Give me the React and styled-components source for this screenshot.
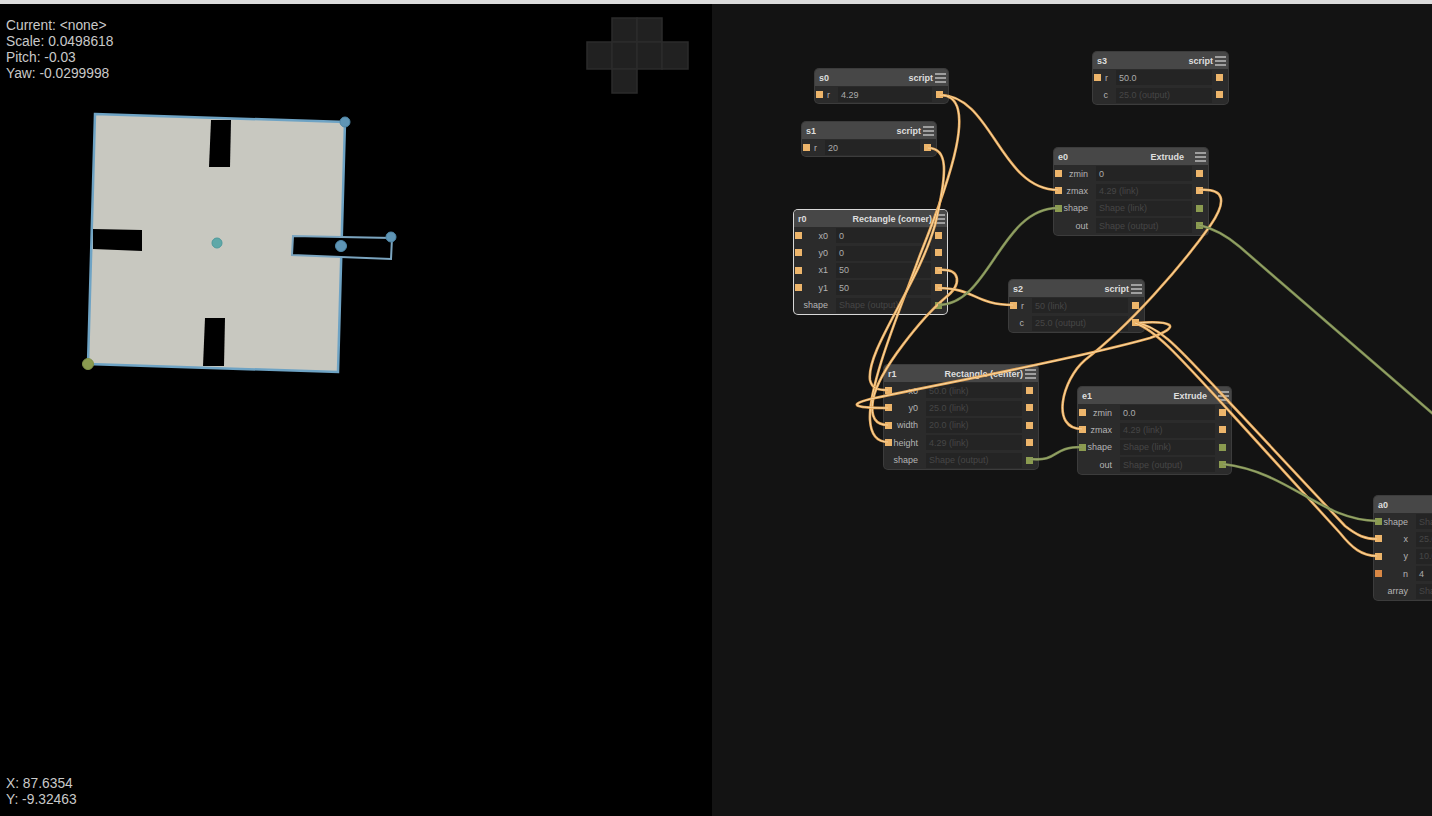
import React from 'react';
import styled, { createGlobalStyle } from 'styled-components';

const GlobalStyle = createGlobalStyle`
  html, body {
    margin: 0;
    padding: 0;
    background: #000;
    overflow: hidden;
  }
`;

const CANVAS_X = 712;
const CANVAS_Y = 4;

const Page = styled.div`
  width: 1432px;
  height: 816px;
  display: flex;
  flex-direction: column;
  font-family: "Liberation Sans", Arial, sans-serif;
`;

const TopStrip = styled.div`
  height: 4px;
  flex: none;
  background: #dcdcdc;
`;

const Panes = styled.div`
  flex: 1;
  display: flex;
  min-height: 0;
`;

// left side, 3d viewport
const Viewport = styled.div`
  position: relative;
  width: 712px;
  flex: none;
  background: #000;
  display: flex;
  flex-direction: column;
  justify-content: space-between;
  padding: 14px 6px 8px;
  box-sizing: border-box;
`;

const Readout = styled.div`
  font-size: 13.8px;
  line-height: 16px;
  color: #c9c9c9;
`;

const Overlay = styled.svg`
  position: absolute;
  left: 0;
  top: 0;
  pointer-events: none;
`;

const CubeFace = styled.rect`
  fill: #212121;
  stroke: #2b2b2b;
  stroke-width: 1.5;
`;

const Handle = styled.circle`
  fill: ${p => p.$fill || '#5f95b5'};
  stroke: ${p => p.$stroke || '#4f87a8'};
  stroke-width: 1;
`;

// right side, node graph
const Canvas = styled.div`
  position: relative;
  flex: 1;
  overflow: hidden;
  background: #131313;
`;

const NodeBox = styled.div`
  position: absolute;
  left: ${p => p.$x - CANVAS_X}px;
  top: ${p => p.$y - CANVAS_Y}px;
  width: ${p => p.$w}px;
  box-sizing: border-box;
  background: #2b2b2b;
  border-radius: 4px;
  box-shadow: 0 0 0 1px ${p => (p.$selected ? '#d8d8d8' : '#3c3c3c')};
`;

const NodeHeader = styled.div`
  height: 17px;
  display: flex;
  align-items: center;
  justify-content: space-between;
  padding: 0 2px 0 4px;
  background: #474747;
  border-radius: 4px 4px 0 0;
  font-size: 9px;
  font-weight: 700;
  color: #dedede;
  overflow: hidden;
  white-space: nowrap;
`;

const NodeTitle = styled.span`
  margin-left: auto;
  margin-right: ${p => p.$gap || 2}px;
`;

const MenuIcon = styled.svg`
  flex: none;
  width: 11px;
  height: 10px;
  stroke: #bdbdbd;
  stroke-width: 1.6;
`;

const Row = styled.div`
  position: relative;
  height: 17.4px;
  display: flex;
  align-items: center;
  font-size: 9px;
  color: #b4b4b4;
`;

const Label = styled.span`
  flex: none;
  width: ${p => p.$w - 8}px;
  text-align: right;
  box-sizing: border-box;
  margin-right: 8px;
`;

const Value = styled.div`
  flex: 1;
  height: 15px;
  margin-right: 16px;
  padding-left: 3px;
  display: flex;
  align-items: center;
  background: #242424;
  color: ${p => (p.$dim ? '#464646' : '#ababab')};
  white-space: nowrap;
  overflow: hidden;
`;

const Port = styled.span`
  position: absolute;
  top: 5px;
  width: 7px;
  height: 7px;
  background: ${p => p.$color};
  ${p => (p.$side === 'left' ? 'left: 0.5px;' : 'right: 5px;')}
`;

const WireLayer = styled.svg`
  position: absolute;
  left: 0;
  top: 0;
  pointer-events: none;
`;

const ORANGE = '#edb56b';
const GREEN = '#8b9b50';
const DEEP = '#d98845';

const row = (label, value, dim, left, right) => ({ label, value, dim, left, right });
const o = ORANGE;
const g = GREEN;

const nodes = [
  { id: 's0', title: 'script', x: 815, y: 69, w: 133, lw: 23, rows: [row('r', '4.29', false, o, o)] },
  {
    id: 's3', title: 'script', x: 1093, y: 52, w: 135, lw: 23,
    rows: [row('r', '50.0', false, o, o), row('c', '25.0 (output)', true, null, o)],
  },
  { id: 's1', title: 'script', x: 802, y: 122, w: 134, lw: 23, rows: [row('r', '20', false, o, o)] },
  {
    id: 'e0', title: 'Extrude', gap: 11, x: 1054, y: 148, w: 154, lw: 42,
    rows: [
      row('zmin', '0', false, o, o),
      row('zmax', '4.29 (link)', true, o, o),
      row('shape', 'Shape (link)', true, g, g),
      row('out', 'Shape (output)', true, null, g),
    ],
  },
  {
    id: 'r0', title: 'Rectangle (corner)', x: 794, y: 210, w: 153, lw: 42, selected: true,
    rows: [
      row('x0', '0', false, o, o),
      row('y0', '0', false, o, o),
      row('x1', '50', false, o, o),
      row('y1', '50', false, o, o),
      row('shape', 'Shape (output)', true, null, g),
    ],
  },
  {
    id: 's2', title: 'script', x: 1009, y: 280, w: 135, lw: 23,
    rows: [row('r', '50 (link)', true, o, o), row('c', '25.0 (output)', true, null, o)],
  },
  {
    id: 'r1', title: 'Rectangle (center)', x: 884, y: 365, w: 154, lw: 42,
    rows: [
      row('x0', '50.0 (link)', true, o, o),
      row('y0', '25.0 (link)', true, o, o),
      row('width', '20.0 (link)', true, o, o),
      row('height', '4.29 (link)', true, o, o),
      row('shape', 'Shape (output)', true, null, g),
    ],
  },
  {
    id: 'e1', title: 'Extrude', gap: 11, x: 1078, y: 387, w: 153, lw: 42,
    rows: [
      row('zmin', '0.0', false, o, o),
      row('zmax', '4.29 (link)', true, o, o),
      row('shape', 'Shape (link)', true, g, g),
      row('out', 'Shape (output)', true, null, g),
    ],
  },
  {
    id: 'a0', title: 'Array', x: 1374, y: 496, w: 154, lw: 42,
    rows: [
      row('shape', 'Shape (link)', true, g, g),
      row('x', '25.0 (link)', true, o, o),
      row('y', '10.0 (link)', true, o, o),
      row('n', '4', false, DEEP, o),
      row('array', 'Shape (output)', true, null, g),
    ],
  },
];

// page coordinates, read off the screenshot
const wires = [
  { c: 'o', d: 'M940 95 C 992 95 1000 190 1058 190' },
  { c: 'o', d: 'M940 95 C 980 95 950 180 920 255 C 900 310 868 385 870 420 C 871 436 878 442 888 442' },
  { c: 'o', d: 'M928 148 C 948 148 948 170 935 225 C 918 285 866 350 870 380 C 872 389 878 390 888 390' },
  { c: 'o', d: 'M938 270 C 962 268 962 285 945 298 C 925 315 878 370 873 400 C 870 418 876 425 888 425' },
  { c: 'o', d: 'M938 288 C 975 288 975 305 1013 305' },
  { c: 'g', d: 'M938 305 C 990 305 1000 208 1058 208' },
  { c: 'o', d: 'M1199 190 C 1224 188 1228 200 1210 226 C 1180 268 1130 325 1085 360 C 1062 380 1050 429 1082 429' },
  { c: 'g', d: 'M1199 225 C 1212 228 1226 235 1240 247 L 1440 420' },
  { c: 'o', d: 'M1135 323 C 1172 320 1184 326 1150 338 C 1080 358 950 382 875 398 C 848 404 850 408 888 408' },
  { c: 'o', d: 'M1135 323 C 1160 325 1180 350 1230 403 L 1345 526 C 1358 536 1365 539 1377 539' },
  { c: 'o', d: 'M1135 323 C 1155 330 1175 352 1230 412 L 1340 533 C 1352 548 1362 556 1377 556' },
  { c: 'g', d: 'M1030 459 C 1060 462 1050 447 1082 447' },
  { c: 'g', d: 'M1223 464 C 1290 472 1320 520 1377 521' },
];

const Node = ({ node }) => (
  <NodeBox $x={node.x} $y={node.y} $w={node.w} $selected={node.selected}>
    <NodeHeader>
      <span>{node.id}</span>
      <NodeTitle $gap={node.gap}>{node.title}</NodeTitle>
      <MenuIcon viewBox="0 0 11 10">
        <line x1="0" y1="1" x2="11" y2="1" />
        <line x1="0" y1="5" x2="11" y2="5" />
        <line x1="0" y1="9" x2="11" y2="9" />
      </MenuIcon>
    </NodeHeader>
    {node.rows.map(r => (
      <Row key={r.label}>
        {r.left && <Port $side="left" $color={r.left} />}
        <Label $w={node.lw}>{r.label}</Label>
        <Value $dim={r.dim}>{r.value}</Value>
        {r.right && <Port $side="right" $color={r.right} />}
      </Row>
    ))}
  </NodeBox>
);

const ViewCube = () => (
  <Overlay width="712" height="812" viewBox="0 4 712 812">
    <CubeFace x="612" y="18" width="25" height="24" />
    <CubeFace x="637" y="18" width="25" height="24" />
    <CubeFace x="587" y="42" width="25" height="27" />
    <CubeFace x="612" y="42" width="25" height="27" />
    <CubeFace x="637" y="42" width="25" height="27" />
    <CubeFace x="662" y="42" width="26" height="27" />
    <CubeFace x="612" y="69" width="25" height="24" />
  </Overlay>
);

const Sketch = () => (
  <Overlay width="712" height="812" viewBox="0 4 712 812">
    <polygon points="95,114 345,122 338,372 88,364" fill="#c8c8c0" stroke="#6ea3c4" strokeWidth="2.5" />
    <polygon points="211,120 231,120 230,167 209,167" fill="#000" />
    <polygon points="93,229 142,230 142,251 93,249" fill="#000" />
    <polygon points="205,318 225,318 224,366 203,366" fill="#000" />
    <polygon points="293,236 342,237 392,238 391,259 341,257 292,255" fill="#000" />
    <polyline points="341,237 392,238 391,259 341,257 292,255 293,236 341,237" fill="none" stroke="#7ba5c0" strokeWidth="2" />
    <Handle cx="345" cy="122" r="5" />
    <Handle cx="391" cy="237" r="5" />
    <Handle cx="341" cy="246" r="5.5" />
    <Handle cx="217" cy="243" r="5" $fill="#5fa8a8" $stroke="#4e9a9c" />
    <Handle cx="88" cy="364" r="5.5" $fill="#8b9b50" $stroke="#7f9148" />
  </Overlay>
);

export default function App() {
  return (
    <Page>
      <GlobalStyle />
      <TopStrip />
      <Panes>
        <Viewport>
          <ViewCube />
          <Sketch />
          <Readout>
            <div>Current: &lt;none&gt;</div>
            <div>Scale: 0.0498618</div>
            <div>Pitch: -0.03</div>
            <div>Yaw: -0.0299998</div>
          </Readout>
          <Readout>
            <div>X: 87.6354</div>
            <div>Y: -9.32463</div>
          </Readout>
        </Viewport>
        <Canvas>
          {nodes.map(n => <Node key={n.id} node={n} />)}
          <WireLayer width="720" height="812" viewBox="712 4 720 812" fill="none">
            {wires.map((w, i) => (
              <g key={i}>
                <path d={w.d} stroke={w.c === 'o' ? '#e9a95a' : '#7f8f55'} strokeWidth="2.6" />
                <path d={w.d} stroke={w.c === 'o' ? '#f8d9a6' : '#9aa86a'} strokeWidth="1" />
              </g>
            ))}
          </WireLayer>
        </Canvas>
      </Panes>
    </Page>
  );
}
